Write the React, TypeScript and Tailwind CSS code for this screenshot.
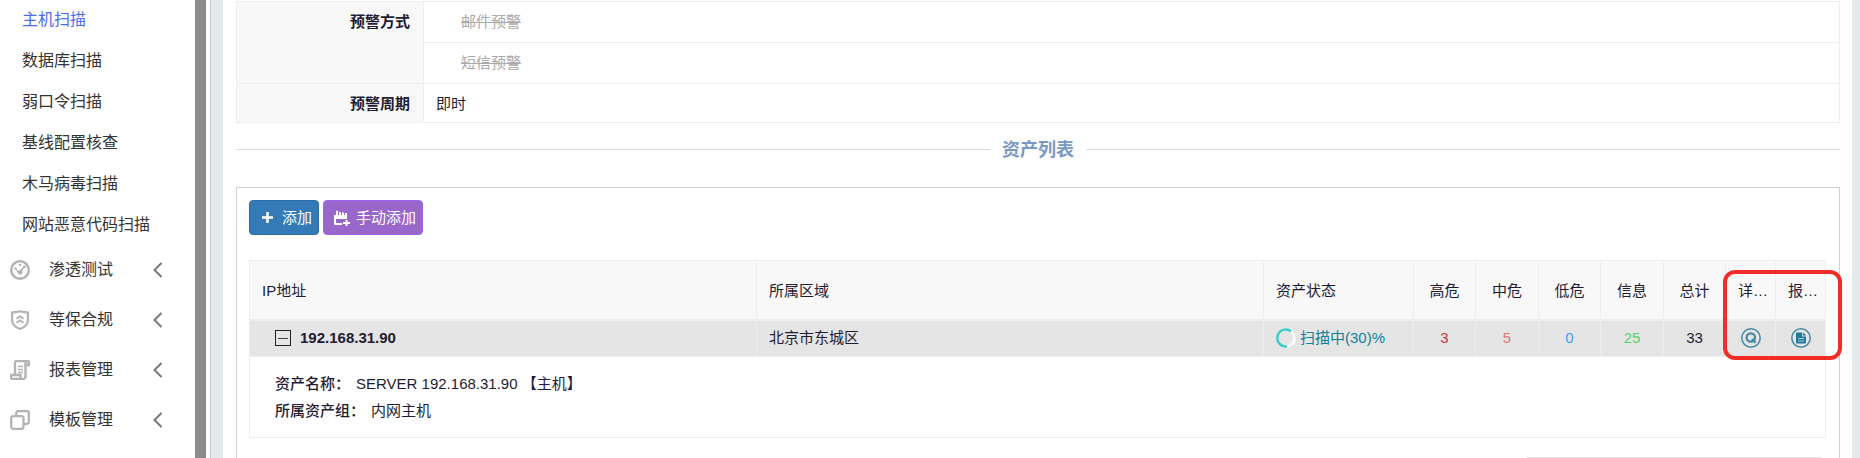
import React from "react";

const scanLinks = ["主机扫描", "数据库扫描", "弱口令扫描", "基线配置核查", "木马病毒扫描", "网站恶意代码扫描"];

const GaugeIcon = () => (
  <svg width="20" height="20" viewBox="0 0 20 20" fill="none" stroke="#b3b3b3" strokeWidth="2.4">
    <circle cx="10" cy="10" r="8.8" />
    <path d="M5 8.5l3 4.500a2.300 2.300 0 1 0 3.500-2.500l-1.500-.5-1 1z" fill="#b3b3b3" stroke="none" />
    <path d="M10.500 11l4-4.500" strokeWidth="1.8" />
    <circle cx="10" cy="5" r="1.200" fill="#b3b3b3" stroke="none" />
    <circle cx="5.600" cy="8.500" r="1.300" fill="#b3b3b3" stroke="none" />
    <circle cx="14.600" cy="6.800" r="1.300" fill="#b3b3b3" stroke="none" />
  </svg>
);

const ShieldIcon = () => (
  <svg width="20" height="20" viewBox="0 0 20 20" fill="none" stroke="#b3b3b3" strokeWidth="2.200" strokeLinejoin="round">
    <path d="M10 1.200c2.500.8 5 1.200 7.900 1.200v8.300c0 4-3.900 6.600-7.900 8.200-4-1.600-7.900-4.200-7.900-8.200V2.400c2.900 0 5.400-.4 7.900-1.200z" />
    <path d="M6.500 8.800L10 6.300l3.500 2.500M6.500 12.800L10 10.300l3.500 2.500" strokeWidth="2" />
  </svg>
);

const ScrollIcon = () => (
  <svg width="20" height="20" viewBox="0 0 20 20" fill="none" stroke="#b3b3b3" strokeWidth="2.400">
    <path d="M5 14V3a2 2 0 0 1 2-2h10a2 2 0 0 1 2 2v2h-3.500" />
    <path d="M17 1a2 2 0 0 0-1.500 2v13.500a2.500 2.500 0 0 1-2.500 2.500H3a2 2 0 0 1-2-2v-2h9.500v2a2 2 0 0 0 2.500 2" />
    <path d="M8 6.500h5M8 9.500h5M8 12.500h5" strokeWidth="1.600" />
  </svg>
);

const CopyIcon = () => (
  <svg width="20" height="20" viewBox="0 0 20 20" fill="none" stroke="#b3b3b3" strokeWidth="2.300">
    <rect x="1.200" y="6.200" width="12.300" height="12.600" rx="2" />
    <path d="M6.200 6V3.200a2 2 0 0 1 2-2h8.600a2 2 0 0 1 2 2v8.600a2 2 0 0 1-2 2h-3.300" />
  </svg>
);

const menus = [
  { title: "渗透测试", icon: <GaugeIcon /> },
  { title: "等保合规", icon: <ShieldIcon /> },
  { title: "报表管理", icon: <ScrollIcon /> },
  { title: "模板管理", icon: <CopyIcon /> },
];

const columns = [
  { title: "IP地址", width: "", align: "text-left" },
  { title: "所属区域", width: "", align: "text-left" },
  { title: "资产状态", width: "w-[150px]", align: "text-left" },
  { title: "高危", width: "w-[62px]", align: "text-center" },
  { title: "中危", width: "w-[63px]", align: "text-center" },
  { title: "低危", width: "w-[62px]", align: "text-center" },
  { title: "信息", width: "w-[63px]", align: "text-center" },
  { title: "总计", width: "w-[62px]", align: "text-center" },
  { title: "详情", width: "w-[50px]", align: "text-left" },
  { title: "报告", width: "w-[50px]", align: "text-left" },
];

const counts = [
  { value: 3, color: "text-[#c9303e]" },
  { value: 5, color: "text-[#dd7a6c]" },
  { value: 0, color: "text-[#3aa0ff]" },
  { value: 25, color: "text-[#55d368]" },
  { value: 33, color: "text-[#1f1b33]" },
];

const Sidebar = () => (
  <aside className="w-[195px] shrink-0 bg-white text-base text-[#333333]">
    <nav>
      <ul className="-mt-px">
        {scanLinks.map((link, index) => (
          <li key={link}>
            <a
              href="#"
              className={`flex h-[41px] items-center pl-[22px] ${index === 0 ? "text-[#4a6cf7]" : ""}`}
            >
              {link}
            </a>
          </li>
        ))}
      </ul>
      {menus.map((menu) => (
        <button key={menu.title} className="flex h-[50px] w-full items-center pr-[32px] pl-[10px]">
          {menu.icon}
          <span className="ml-[19px]">{menu.title}</span>
          <svg className="ml-auto" width="10" height="16" viewBox="0 0 10 16" fill="none" stroke="#777777" strokeWidth="2">
            <path d="M8.500 1L1.500 8l7 7" />
          </svg>
        </button>
      ))}
    </nav>
  </aside>
);

const WarningTable = () => (
  <table className="w-full table-fixed border-collapse border border-[#eeeeee]">
    <colgroup>
      <col className="w-[187px]" />
      <col />
    </colgroup>
    <tbody>
      <tr className="h-[41px]">
        <th rowSpan={2} className="border border-[#eeeeee] bg-[#f8f8f8] pt-[10px] pr-[13px] text-right align-top font-bold">
          预警方式
        </th>
        <td className="border border-[#eeeeee] pl-[37px] text-[#aaaaaa] line-through">邮件预警</td>
      </tr>
      <tr className="h-[41px]">
        <td className="border border-[#eeeeee] pl-[37px] text-[#aaaaaa] line-through">短信预警</td>
      </tr>
      <tr className="h-[39px]">
        <th className="border border-[#eeeeee] bg-[#f8f8f8] pt-[2px] pr-[13px] text-right font-bold">预警周期</th>
        <td className="border border-[#eeeeee] pt-[2px] pl-[12px]">即时</td>
      </tr>
    </tbody>
  </table>
);

const AssetTable = () => (
  <table className="mt-[25px] w-full table-fixed border-collapse border border-[#eeeeee]">
    <colgroup>
      {columns.map((col) => (
        <col key={col.title} className={col.width} />
      ))}
    </colgroup>
    <thead>
      <tr className="h-[59px] bg-[#f8f8f8]">
        {columns.map((col) => (
          <th
            key={col.title}
            className={`truncate border border-b-2 border-[#eeeeee] px-[12px] pt-[3px] font-normal ${col.align}`}
          >
            {col.title}
          </th>
        ))}
      </tr>
    </thead>
    <tbody>
      <tr className="h-[37px] bg-[#e5e5e5]">
        <td className="border border-[#eeeeee] pl-[25px]">
          <div className="flex items-center gap-[9px]">
            <button aria-label="收起" className="flex size-4 items-center justify-center border border-[#222222]">
              <span className="h-px w-[10px] bg-[#444444]" />
            </button>
            <strong>192.168.31.90</strong>
          </div>
        </td>
        <td className="border border-[#eeeeee] pl-[12px]">北京市东城区</td>
        <td className="border border-[#eeeeee] pl-[12px] text-[#11809a]">
          <div className="flex items-center gap-1">
            <svg width="20" height="20" viewBox="0 0 20 20" fill="none" strokeWidth="3">
              <circle cx="10" cy="10" r="8.500" stroke="#f8f8f8" />
              <path d="M15 3.200A8.500 8.500 0 1 0 11 18.400" stroke="#3accc6" strokeWidth="2.500" />
            </svg>
            扫描中(30)%
          </div>
        </td>
        {counts.map((count) => (
          <td key={count.value} className={`border border-[#eeeeee] text-center ${count.color}`}>
            {count.value}
          </td>
        ))}
        <td className="border border-[#eeeeee]">
          <button aria-label="详情" className="mx-auto block">
            <svg width="20" height="20" viewBox="0 0 20 20" fill="none" stroke="#4189a6">
              <circle cx="10" cy="10" r="9.200" strokeWidth="1.500" />
              <circle cx="9.800" cy="9.500" r="4.200" strokeWidth="2.200" />
              <path d="M11 11l3.500 3.800" strokeWidth="2.200" />
            </svg>
          </button>
        </td>
        <td className="border border-[#eeeeee]">
          <button aria-label="报告" className="mx-auto block">
            <svg width="20" height="20" viewBox="0 0 20 20" fill="none">
              <circle cx="10" cy="10" r="9.200" stroke="#4189a6" strokeWidth="1.500" />
              <path d="M5 5.500a1 1 0 0 1 1-1h5v4h4V14.500a1 1 0 0 1-1 1H6a1 1 0 0 1-1-1z" fill="#1f7a9e" />
              <path d="M11.800 4.200L15.200 7.600h-3.400z" fill="#1f7a9e" />
              <path d="M7 10.500h6M7 13h6" stroke="#a9cad6" />
            </svg>
          </button>
        </td>
      </tr>
      <tr className="h-[81px]">
        <td colSpan={10} className="border border-[#eeeeee] pl-[25px] leading-[27px]">
          <p>
            <span className="font-medium">资产名称：</span>
            <span className="ml-[6px]">SERVER 192.168.31.90 【主机】</span>
          </p>
          <p>
            <span className="font-medium">所属资产组：</span>
            <span className="ml-[6px]">内网主机</span>
          </p>
        </td>
      </tr>
    </tbody>
  </table>
);

export default function App() {
  return (
    <div className="flex h-screen overflow-hidden bg-white font-['Liberation_Sans','Noto_Sans_CJK_SC',sans-serif] text-[15px] leading-5 text-[#1f1b33]">
      <Sidebar />
      {/* Scrollbar */}
      <div className="w-[11px] shrink-0 bg-[#8b8b8b]" />
      <div className="ml-[4px] min-w-0 flex-1 border-l border-[#c8cdd0] bg-[#e4e9ec] pr-2 pl-[12px]">
        <main className="h-full bg-white px-[12px] pt-[1px]">
          <div className="pl-[1px]">
            <WarningTable />
            <h2 className="flex h-[52px] items-center gap-[12px] text-[#7899c6]">
              <span className="h-px flex-1 bg-[#d9dadd]" />
              <span className="pt-[2px] text-lg font-bold">资产列表</span>
              <span className="h-px flex-1 bg-[#d9dadd]" />
            </h2>
            {/* Asset list */}
            <section className="mt-[12px] border border-[#cdd0d9] pt-[12px] pr-[13px] pl-[12px]">
              <div className="flex gap-1">
                <button className="flex h-[35px] items-center rounded border border-[#2e6da4] bg-[#337ab7] pr-[6px] pl-[12px] text-white">
                  <svg className="mr-[9px]" width="11" height="11" viewBox="0 0 11 11" stroke="#ffffff" strokeWidth="2.500">
                    <path d="M5.500 0v11M0 5.500h11" />
                  </svg>
                  添加
                </button>
                <button className="flex h-[35px] items-center rounded border border-[#9a66f0] bg-[#9966cc] pr-[6px] pl-[10px] text-white">
                  <svg className="mr-[6px]" width="16" height="16" viewBox="0 0 16 16" fill="#ffffff">
                    <path d="M0 5h2V1.500a1 1 0 0 1 2 0V5h1V2h2v3h1V2.500h2V5h1V3h2v6H2v4h6v2H1.500A1.500 1.500 0 0 1 0 13.500z" />
                    <path d="M11.500 10h2v2H16v2h-2.500v2h-2v-2H9v-2h2.500z" />
                  </svg>
                  手动添加
                </button>
              </div>
              <div className="relative">
                <AssetTable />
                {/* Highlight around the row actions */}
                <div className="pointer-events-none absolute top-[10px] -right-[16px] h-[90px] w-[119px] rounded-xl border-4 border-[#f42c25]" />
              </div>
              <div className="mt-[19px] flex justify-end pr-[2px]">
                <div className="h-[35px] w-[300px] rounded border border-[#dddddd]" />
              </div>
            </section>
          </div>
        </main>
      </div>
    </div>
  );
}
